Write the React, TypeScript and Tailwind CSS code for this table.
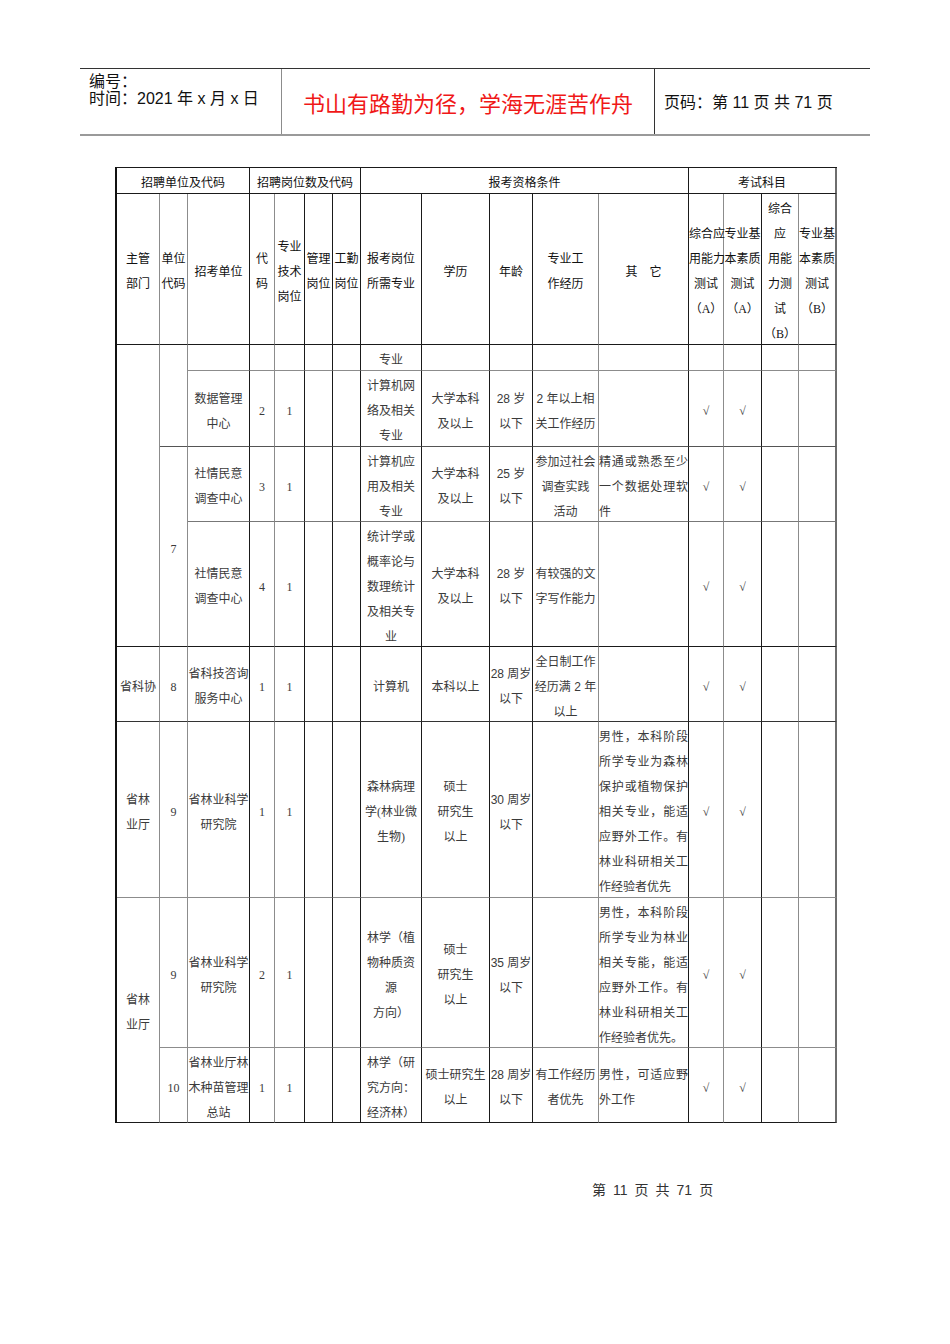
import React from "react";

type Kind = "h" | "d" | "s" | "j";
type Cell = { t: string; r0: number; c0: number; rs?: number; cs?: number; k: Kind };

const RB = [
  "border-r border-r-[#8c8c8c]",
  "border-r border-r-[#8c8c8c]",
  "border-r border-r-[#1a1a1a]",
  "border-r border-r-[#8c8c8c]",
  "border-r border-r-[#1a1a1a]",
  "border-r border-r-[#1a1a1a]",
  "border-r border-r-[#1a1a1a]",
  "border-r border-r-[#1a1a1a]",
  "border-r border-r-[#1a1a1a]",
  "border-r border-r-[#1a1a1a]",
  "border-r border-r-[#8c8c8c]",
  "border-r border-r-[#1a1a1a]",
  "border-r border-r-[#8c8c8c]",
  "border-r border-r-[#1a1a1a]",
  "border-r border-r-[#8c8c8c]",
  "border-r-2 border-r-[#6e6e6e]",
];

const BB = [
  "border-b border-b-[#1a1a1a]",
  "border-b border-b-[#1a1a1a]",
  "border-b border-b-[#8c8c8c]",
  "border-b border-b-[#555555]",
  "border-b border-b-[#777777]",
  "border-b border-b-[#1a1a1a]",
  "border-b border-b-[#333333]",
  "border-b border-b-[#8c8c8c]",
  "border-b border-b-[#8c8c8c]",
  "border-b border-b-[#1a1a1a]",
];

const RS: Record<number, string> = { 1: "", 2: "row-span-2", 4: "row-span-4" };
const CS: Record<number, string> = { 1: "", 3: "col-span-3", 4: "col-span-4", 5: "col-span-5" };

const KIND: Record<Kind, string> = {
  h: "text-[#111111]",
  d: "text-[#3a3a3a]",
  s: "text-[#3a3a3a] font-['Liberation_Sans','Noto_Sans_CJK_SC',sans-serif]",
  j: "text-[#3a3a3a]",
};

const cells: Cell[] = [];

// header row 1
cells.push({ t: "招聘单位及代码", r0: 0, c0: 0, cs: 3, k: "h" });
cells.push({ t: "招聘岗位数及代码", r0: 0, c0: 3, cs: 4, k: "h" });
cells.push({ t: "报考资格条件", r0: 0, c0: 7, cs: 5, k: "h" });
cells.push({ t: "考试科目", r0: 0, c0: 12, cs: 4, k: "h" });

// header row 2
const hdr2 = [
  "主管\n部门",
  "单位\n代码",
  "招考单位",
  "代\n码",
  "专业\n技术\n岗位",
  "管理\n岗位",
  "工勤\n岗位",
  "报考岗位\n所需专业",
  "学历",
  "年龄",
  "专业工\n作经历",
  "其　它",
  "综合应\n用能力\n测试\n（A）",
  "专业基\n本素质\n测试\n（A）",
  "综合\n应\n用能\n力测\n试\n（B）",
  "专业基\n本素质\n测试\n（B）",
];
hdr2.forEach((t, i) => cells.push({ t, r0: 1, c0: i, k: "h" }));

type Row = { r0: number; col0?: { t: string; rs: number }; col1?: { t: string; rs: number }; rest: string[] };

const rows: Row[] = [
  {
    r0: 2,
    col0: { t: "", rs: 4 },
    col1: { t: "", rs: 2 },
    rest: ["", "", "", "", "", "专业", "", "", "", "", "", "", "", ""],
  },
  {
    r0: 3,
    rest: [
      "数据管理\n中心",
      "2",
      "1",
      "",
      "",
      "计算机网\n络及相关\n专业",
      "大学本科\n及以上",
      "28 岁\n以下",
      "2 年以上相\n关工作经历",
      "",
      "√",
      "√",
      "",
      "",
    ],
  },
  {
    r0: 4,
    col1: { t: "7", rs: 2 },
    rest: [
      "社情民意\n调查中心",
      "3",
      "1",
      "",
      "",
      "计算机应\n用及相关\n专业",
      "大学本科\n及以上",
      "25 岁\n以下",
      "参加过社会\n调查实践\n活动",
      "精通或熟悉至少\n一个数据处理软\n件",
      "√",
      "√",
      "",
      "",
    ],
  },
  {
    r0: 5,
    rest: [
      "社情民意\n调查中心",
      "4",
      "1",
      "",
      "",
      "统计学或\n概率论与\n数理统计\n及相关专\n业",
      "大学本科\n及以上",
      "28 岁\n以下",
      "有较强的文\n字写作能力",
      "",
      "√",
      "√",
      "",
      "",
    ],
  },
  {
    r0: 6,
    col0: { t: "省科协", rs: 1 },
    col1: { t: "8", rs: 1 },
    rest: [
      "省科技咨询\n服务中心",
      "1",
      "1",
      "",
      "",
      "计算机",
      "本科以上",
      "28 周岁\n以下",
      "全日制工作\n经历满 2 年\n以上",
      "",
      "√",
      "√",
      "",
      "",
    ],
  },
  {
    r0: 7,
    col0: { t: "省林\n业厅", rs: 1 },
    col1: { t: "9", rs: 1 },
    rest: [
      "省林业科学\n研究院",
      "1",
      "1",
      "",
      "",
      "森林病理\n学(林业微\n生物)",
      "硕士\n研究生\n以上",
      "30 周岁\n以下",
      "",
      "男性，本科阶段\n所学专业为森林\n保护或植物保护\n相关专业，能适\n应野外工作。有\n林业科研相关工\n作经验者优先",
      "√",
      "√",
      "",
      "",
    ],
  },
  {
    r0: 8,
    col0: { t: "省林\n业厅", rs: 2 },
    col1: { t: "9", rs: 1 },
    rest: [
      "省林业科学\n研究院",
      "2",
      "1",
      "",
      "",
      "林学（植\n物种质资\n源\n方向）",
      "硕士\n研究生\n以上",
      "35 周岁\n以下",
      "",
      "男性，本科阶段\n所学专业为林业\n相关专能，能适\n应野外工作。有\n林业科研相关工\n作经验者优先。",
      "√",
      "√",
      "",
      "",
    ],
  },
  {
    r0: 9,
    col1: { t: "10", rs: 1 },
    rest: [
      "省林业厅林\n木种苗管理\n总站",
      "1",
      "1",
      "",
      "",
      "林学（研\n究方向：\n经济林）",
      "硕士研究生\n以上",
      "28 周岁\n以下",
      "有工作经历\n者优先",
      "男性，可适应野\n外工作",
      "√",
      "√",
      "",
      "",
    ],
  },
];

rows.forEach((row) => {
  if (row.col0) cells.push({ t: row.col0.t, r0: row.r0, c0: 0, rs: row.col0.rs, k: "d" });
  if (row.col1) cells.push({ t: row.col1.t, r0: row.r0, c0: 1, rs: row.col1.rs, k: "d" });
  row.rest.forEach((t, i) => {
    const c0 = i + 2;
    const k: Kind = c0 === 9 || c0 === 10 ? "s" : c0 === 11 ? "j" : "d";
    cells.push({ t, r0: row.r0, c0, k });
  });
});

function TableCell({ cell }: { cell: Cell }) {
  const rs = cell.rs ?? 1;
  const cs = cell.cs ?? 1;
  const cEnd = cell.c0 + cs - 1;
  const rEnd = cell.r0 + rs - 1;
  const lines = cell.t ? cell.t.split("\n") : [];
  const cls = [
    RB[cEnd],
    BB[rEnd],
    RS[rs],
    CS[cs],
    KIND[cell.k],
    "flex flex-col justify-center text-[12px] leading-[25px] min-w-0",
  ].join(" ");
  return (
    <div className={cls}>
      <div className="translate-y-[2.5px]">
        {lines.map((ln, j) =>
          cell.k === "j" ? (
            <div
              key={j}
              className={
                j < lines.length - 1 ? "text-justify [text-align-last:justify]" : "text-left"
              }
            >
              {ln}
            </div>
          ) : (
            <div key={j} className="text-center whitespace-nowrap">
              {ln}
            </div>
          )
        )}
      </div>
    </div>
  );
}

export default function App() {
  return (
    <div
      lang="zh-CN"
      className="w-[950px] min-h-[1344px] bg-white pt-[68px] font-['Liberation_Serif','Noto_Sans_CJK_SC',serif]"
    >
      {/* page header */}
      <div className="ml-[80px] w-[790px] h-[68px] flex border-t border-t-[#333333] border-b-2 border-b-[#9a9a9a] font-['Liberation_Sans','Noto_Sans_CJK_SC',sans-serif]">
        <div className="w-[202px] border-r border-r-[#8c8c8c] pl-[9px] pt-[4px] text-[16px] leading-[17px] text-[#111111]">
          <div>编号：</div>
          <div>时间：2021 年 x 月 x 日</div>
        </div>
        <div className="w-[373px] border-r border-r-[#333333] flex items-center justify-center pt-[5px] text-[22px] text-[#f01818]">
          书山有路勤为径，学海无涯苦作舟
        </div>
        <div className="flex-1 flex items-center pl-[9px] pt-[3px] text-[16px] text-[#111111]">
          页码：第 11 页 共 71 页
        </div>
      </div>

      {/* table */}
      <div className="ml-[115px] mt-[31px] w-[722px] grid grid-cols-[43px_28px_62px_25px_30px_28px_28px_61px_68px_43px_66px_90px_35px_38px_37px_38px] grid-rows-[26px_151px_26px_76px_75px_125px_75px_176px_150px_75px] border-l-2 border-l-[#111111] border-t border-t-[#1a1a1a]">
        {cells.map((c, i) => (
          <TableCell key={i} cell={c} />
        ))}
      </div>

      {/* footer */}
      <div className="ml-[592px] mt-[57px] flex gap-[7px] text-[14px] leading-[20px] text-[#333333] font-['Liberation_Sans','Noto_Sans_CJK_SC',sans-serif]">
        <span>第</span>
        <span>11</span>
        <span>页</span>
        <span>共</span>
        <span>71</span>
        <span>页</span>
      </div>
    </div>
  );
}
